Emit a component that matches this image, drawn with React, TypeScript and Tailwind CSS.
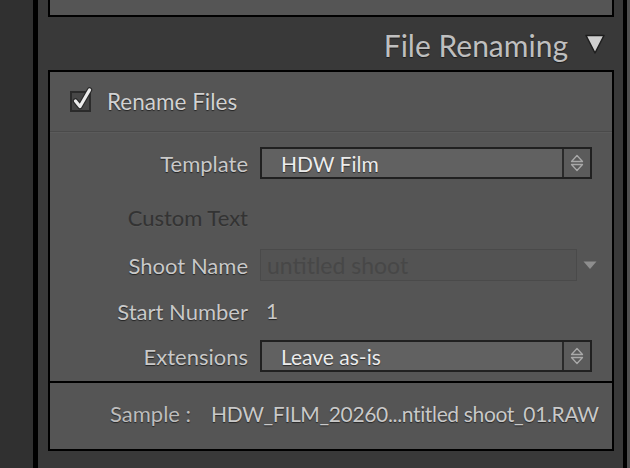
import type { ReactNode } from 'react';

const font = { fontFamily: 'Lato, "Open Sans", sans-serif' };

function Stepper() {
  return (
    <div className="flex w-[28px] items-center justify-center border-l-2 border-[#2a2a2a] bg-[#5b5b5b]">
      <svg width="16" height="20" viewBox="0 0 16 20">
        <path d="M8 2.5 L13.5 8.5 L2.5 8.5 Z" fill="#5b5b5b" stroke="#a9a9a9" strokeWidth="1.3" strokeLinejoin="round" />
        <path d="M2.5 11.5 L13.5 11.5 L8 17.5 Z" fill="#5b5b5b" stroke="#a9a9a9" strokeWidth="1.3" strokeLinejoin="round" />
      </svg>
    </div>
  );
}

function Select({ value }: { value: string }) {
  return (
    <div className="flex h-[32px] w-[332px] border-2 border-[#202020] bg-[#616161]">
      <span className="flex-1 pl-[19px] text-[21px] leading-[30px] text-[#ececec] [text-shadow:0_1px_1px_rgba(0,0,0,0.55)]">
        {value}
      </span>
      <Stepper />
    </div>
  );
}

function Row({ label, dim, className, children }: { label: string; dim?: boolean; className?: string; children?: ReactNode }) {
  return (
    <div className={`flex h-[32px] items-center ${className ?? ''}`}>
      <span
        className={`w-[198px] whitespace-nowrap text-right text-[22px] ${
          dim
            ? 'text-[#333333] [text-shadow:0_1px_0_rgba(255,255,255,0.05)]'
            : 'text-[#c9c9c9] [text-shadow:0_1px_1px_rgba(0,0,0,0.6)]'
        }`}
      >
        {label}
      </span>
      <div className="ml-[12px] flex items-center">{children}</div>
    </div>
  );
}

export default function App() {
  return (
    <div className="flex h-[468px] w-[630px] overflow-hidden bg-[#303030]" style={font}>
      <div className="w-[33px] shrink-0" />
      <div className="w-[5px] shrink-0 bg-black" />
      <div className="flex w-[585px] shrink-0 flex-col bg-[#393939] pl-[10px] pr-[9px]">
        {/* previous section, cut off */}
        <div className="h-[17px] shrink-0 border-x-2 border-b-2 border-black bg-[#555555]" />

        <div className="flex h-[53px] shrink-0 items-center justify-end pr-[8px]">
          <span className="pt-[2px] text-[30px] leading-none text-[#bfbfbf] [text-shadow:0_1px_1px_rgba(0,0,0,0.5)]">
            File Renaming
          </span>
          <svg className="ml-[16px]" width="22" height="22" viewBox="0 0 22 22">
            <path d="M2 2.5 L20 2.5 L11 20 Z" fill="#cfcfcf" stroke="#1e1e1e" strokeWidth="1.5" strokeLinejoin="round" />
          </svg>
        </div>

        <div className="flex h-[381px] shrink-0 flex-col border-2 border-black bg-[#555555]">
          <div className="flex h-[59px] shrink-0 items-center pl-[20px]">
            <div className="relative h-[21px] w-[21px] border-2 border-[#2b2b2b] bg-[#474747]">
              <svg className="absolute left-[0px] top-[-6px]" width="22" height="24" viewBox="0 0 22 24">
                <path d="M3.5 14 L8 19.5 L17.5 3" fill="none" stroke="#2a2a2a" strokeWidth="5.5" strokeLinecap="round" strokeLinejoin="round" />
                <path d="M3.5 14 L8 19.5 L17.5 3" fill="none" stroke="#ececec" strokeWidth="3.2" strokeLinecap="round" strokeLinejoin="round" />
              </svg>
            </div>
            <span className="ml-[16px] text-[22.5px] text-[#d2d2d2] [text-shadow:0_1px_1px_rgba(0,0,0,0.6)]">
              Rename Files
            </span>
          </div>
          <div className="h-px shrink-0 bg-[#4a4a4a]" />
          <div className="h-px shrink-0 bg-[#5b5b5b]" />

          <Row label="Template" className="mt-[14px]">
            <Select value="HDW Film" />
          </Row>
          <Row label="Custom Text" dim className="mt-[22px]" />
          <Row label="Shoot Name" className="mt-[16px]">
            <div className="flex items-center">
              <div className="h-[32px] w-[317px] border border-[#4a4a4a] bg-[#535353] pl-[6px] text-[23px] leading-[30px] text-[#474747]">
                untitled shoot
              </div>
              <svg className="ml-[6px]" width="14" height="9" viewBox="0 0 14 9">
                <path d="M0.5 0.5 L13.5 0.5 L7 8 Z" fill="#8e8e8e" />
              </svg>
            </div>
          </Row>
          <Row label="Start Number" className="mt-[14px]">
            <span className="pl-[6px] text-[21px] text-[#c9c9c9] [text-shadow:0_1px_1px_rgba(0,0,0,0.6)]">1</span>
          </Row>
          <Row label="Extensions" className="mt-[13px]">
            <Select value="Leave as-is" />
          </Row>

          <div className="mt-auto h-[2px] shrink-0 bg-black" />
          <div className="flex h-[66px] shrink-0 items-center whitespace-nowrap pb-[5px] pl-[60px] [text-shadow:0_1px_1px_rgba(0,0,0,0.55)]">
            <span className="text-[22px] text-[#bdbdbd]">Sample :</span>
            <span className="ml-[20px] text-[21px] tracking-[-0.35px] text-[#c9c9c9]">
              HDW_FILM_20260...ntitled shoot_01.RAW
            </span>
          </div>
        </div>
      </div>
      <div className="w-[4px] shrink-0 bg-black" />
      <div className="w-[3px] shrink-0 bg-[#4f4f4f]" />
    </div>
  );
}
